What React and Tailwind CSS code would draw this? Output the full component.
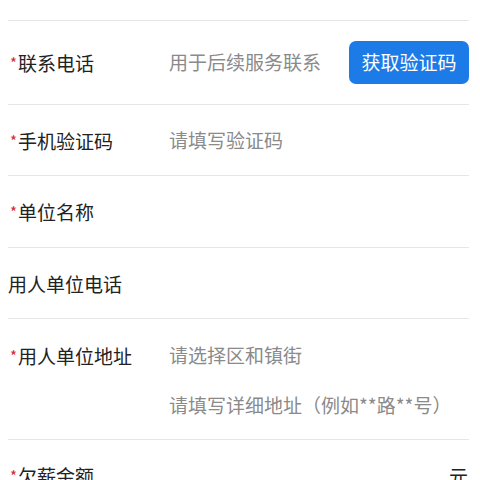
export default function App() {
  const Label = ({ text, required }) => (
    <span className="flex items-start leading-none">
      {required && (
        <span className="mr-[1px] inline-block w-[7px] pt-[2px] text-[15px] leading-none text-[#d9262c]">*</span>
      )}
      <span>{text}</span>
    </span>
  );

  return (
    <div
      className="h-[480px] w-[480px] overflow-hidden bg-white pl-2 pr-[11px] text-[19px] text-[#222222]"
      style={{ fontFamily: '"Noto Sans CJK SC", "Noto Sans", sans-serif' }}
    >
      <div className="h-[21px] border-b border-[#e6e6e6]" />

      {/* 联系电话 */}
      <div className="flex h-[84px] items-center border-b border-[#e6e6e6]">
        <div className="flex w-[161px] items-center pl-[2px]">
          <Label text="联系电话" required />
        </div>
        <div className="flex-1 text-[#8a8a8a]">用于后续服务联系</div>
        <button className="h-[43px] w-[120px] rounded-[7px] bg-[#1d7be8] text-white">获取验证码</button>
      </div>

      {/* 手机验证码 */}
      <div className="flex h-[71px] items-center border-b border-[#e6e6e6]">
        <div className="flex w-[161px] items-center pl-[2px]">
          <Label text="手机验证码" required />
        </div>
        <div className="flex-1 text-[#8a8a8a]">请填写验证码</div>
      </div>

      {/* 单位名称 */}
      <div className="flex h-[72px] items-center border-b border-[#e6e6e6]">
        <div className="flex w-[161px] items-center pl-[2px]">
          <Label text="单位名称" required />
        </div>
      </div>

      {/* 用人单位电话 */}
      <div className="flex h-[71px] items-center border-b border-[#e6e6e6]">
        <div className="flex w-[161px] items-center">
          <Label text="用人单位电话" />
        </div>
      </div>

      {/* 用人单位地址 */}
      <div className="flex h-[121px] border-b border-[#e6e6e6] pt-[11px]">
        <div className="flex h-[50px] w-[161px] items-center pl-[2px]">
          <Label text="用人单位地址" required />
        </div>
        <div className="flex-1 text-[#8a8a8a]">
          <div className="flex h-[50px] items-center">请选择区和镇街</div>
          <div className="flex h-[50px] items-center">请填写详细地址（例如**路**号）</div>
        </div>
      </div>

      {/* 欠薪金额 */}
      <div className="flex h-[71px] items-center">
        <div className="flex w-[161px] items-center pl-[2px]">
          <Label text="欠薪金额" required />
        </div>
        <div className="flex-1" />
        <span className="pr-[1px] leading-none">元</span>
      </div>
    </div>
  );
}
